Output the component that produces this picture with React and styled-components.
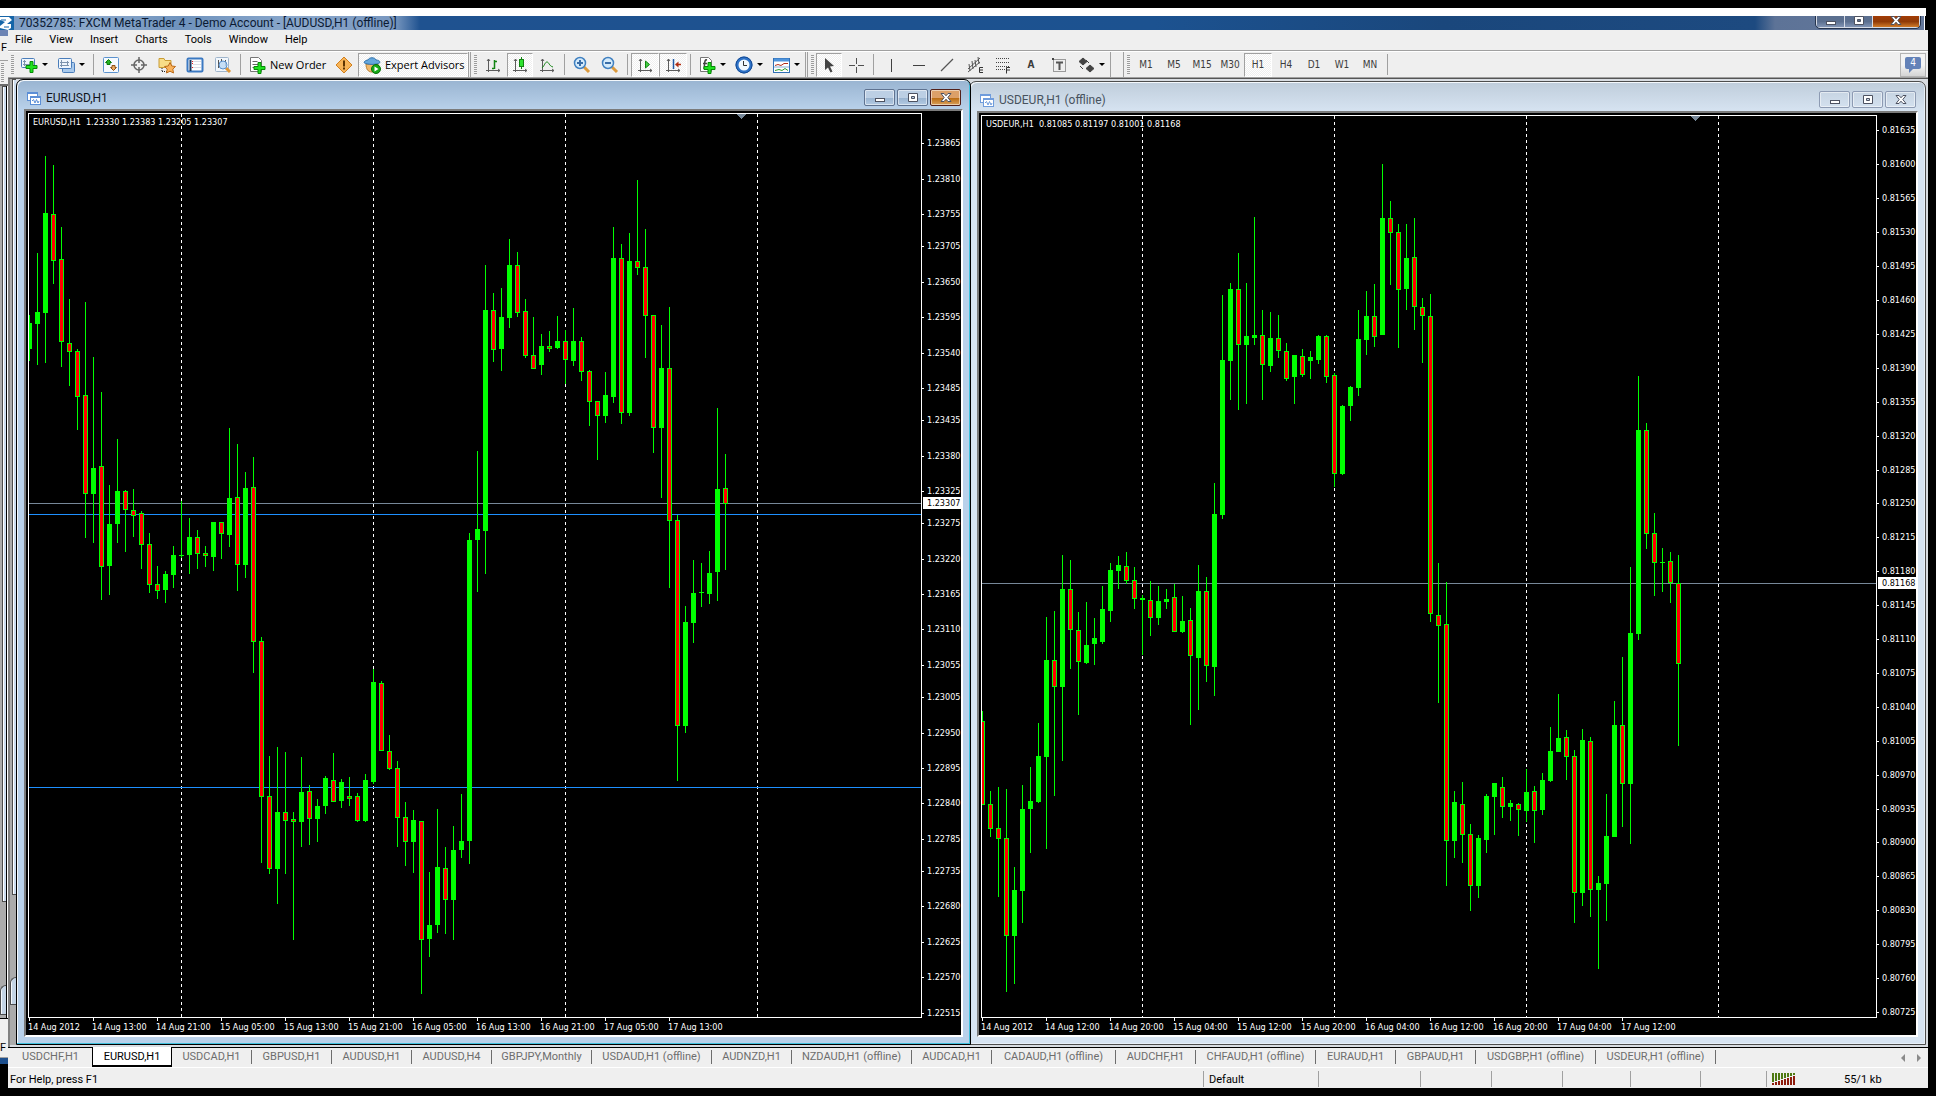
import styled, { createGlobalStyle, css } from "styled-components";

const GlobalStyle = createGlobalStyle`
    * {
        box-sizing: border-box;
    }

    body {
        margin: 0;
        background: #000;
        font-family: Roboto, "Liberation Sans", sans-serif;
        font-size: 11px;
        color: #000;
    }

    button {
        font: inherit;
        color: inherit;
        margin: 0;
        padding: 0;
        border: none;
        background: none;
    }

    svg {
        display: block;
        flex: none;
    }
`

const Page = styled.div`
    height: 100vh;
    min-height: 600px;
    display: flex;
    flex-direction: column;
    padding: 8px 8px 8px 0;
    background: #000;
`

/* main title bar */

const TopStrip = styled.div`
    height: 8px;
    margin-right: 2px;
    background: #fff;
`

const TitleBar = styled.header`
    height: 14px;
    margin-right: 3px;
    display: flex;
    overflow: hidden;
    background: linear-gradient(90deg, #7d9cc4 0, #8ba8cb 100px, #6f93bd 180px, #8aa7cb 300px, #7897bf 395px, #1f5290 420px, #1c5290 60%, #1a477c 75%, #1d4a80 1755px, #5d7397 1775px, #64789c 100%);
    border-right: 1px solid #fff;
`

const AppTitle = styled.h1`
    flex: 1;
    margin: 0 0 0 5px;
    font-size: 12px;
    line-height: 14px;
    font-weight: 400;
    color: #0b1a33;
    white-space: nowrap;
`

const AppButtons = styled.div`
    display: flex;
    height: 12px;
    margin-right: 4px;
    border: 1px solid #d5dbe6;
    border-top: none;
    border-radius: 0 0 4px 4px;
    outline: 1px solid #26344d;
`

const AppButton = styled.button`
    width: ${props => props.$close ? 46 : 28}px;
    display: flex;
    justify-content: center;
    border-right: 1px solid #d5dbe6;
    background: ${props => props.$close ? "linear-gradient(#a33d06, #8f3a08 50%, #d07a28)" : "linear-gradient(#5b6f8f, #5b6f8f 50%, #8194b4)"};

    &:last-child {
        border-right: none;
    }
`

const Body = styled.div`
    flex: 1;
    min-height: 0;
    display: flex;
`

/* sliver of the window behind */

const BackWindow = styled.div`
    width: 8px;
    display: flex;
    flex-direction: column;
    overflow: hidden;
    margin-bottom: 24px;
    background: #efefef;
    border-top: 6px solid #6d84b4;
    border-bottom: 6px solid #1d4f8d;
`

const BackMenu = styled.div`
    height: 25px;
    padding: 5px 0 0 1px;
    border-bottom: 1px solid #a0a0a0;
`

const BackTools = styled.div`
    height: 25px;
    padding: 2px 2px 3px 1px;
    border-bottom: 2px solid #696969;
`

const BackStatus = styled.div`
    height: 40px;
    padding-top: 22px;
    border-top: 1px solid #000;
    border-bottom: 1px solid #a0a0a0;
    white-space: nowrap;
`

const Edges = styled.div`
    width: ${props => props.$back ? 7 : 6}px;
    flex: ${props => props.$back ? "1" : "none"};
    display: flex;
    flex-direction: column;
    background: #ababab;
    border-right: ${props => props.$back ? "1px solid #000" : "none"};
    box-shadow: ${props => props.$back ? "1px 0 #fff" : "none"};
`

const Edge = styled.div`
    flex: ${props => props.$size};
    margin-left: ${props => props.$round ? 0 : 2}px;
    border-radius: ${props => props.$round ? "6px 0 0 0" : "0"};
    border: solid #4d4d4d;
    border-width: 1px 0 1px 1px;
    background: ${props => props.$round ? "linear-gradient(90deg, #f4f8fc 1px, #c4d4e4 1px)" : "linear-gradient(90deg, #fff 1px, #ccdcee 1px)"};
`

const EdgeGap = styled.div`
    flex: ${props => props.$size};
`

/* application window */

const AppWindow = styled.div`
    flex: 1;
    min-width: 0;
    display: flex;
    flex-direction: column;
    background: #efefef;
`

const MenuBar = styled.nav`
    height: 21px;
    display: flex;
    align-items: center;
    gap: 17px;
    padding-left: 7px;
    border-bottom: 1px solid #a0a0a0;
`

const MenuItem = styled.button`
    line-height: 16px;
    font-size: 11px;
`

const Toolbar = styled.div`
    height: 27px;
    display: flex;
    align-items: center;
    border-top: 1px solid #fff;
    border-bottom: 1px solid #a0a0a0;
`

const Grip = styled.span`
    flex: none;
    width: 3px;
    height: 19px;
    margin: 0 2px 0 3px;
    background: repeating-linear-gradient(#9c9c9c 0 1px, #f4f4f4 1px 2px);
`

const BackGrip = styled(Grip)`
    display: block;
    margin: 0;
`

const Separator = styled.span`
    flex: none;
    width: 1px;
    height: 21px;
    margin: 0 3px;
    background: #a0a0a0;
`

const GroupEnd = styled.span`
    flex: none;
    width: ${props => props.$wide ? 14 : 3}px;
    height: 25px;
    border: solid #a0a0a0;
    border-width: 0 1px;
`

const ToolButton = styled.button`
    flex: none;
    width: ${props => props.$width || 28}px;
    height: 24px;
    display: flex;
    align-items: center;
    justify-content: ${props => props.$left ? "flex-start" : "center"};
    gap: 4px;
    padding: ${props => props.$left ? "0 4px" : "0"};
    font-family: "Open Sans", "DejaVu Sans", sans-serif;
    font-size: 11px;
    white-space: nowrap;
    ${props => props.$pressed && css`
        border: 1px solid #a0a0a0;
        border-right-color: #fff;
        border-bottom-color: #fff;
        background: repeating-conic-gradient(#fff 0 25%, #efefef 0 50%) 0 0 / 2px 2px;
    `}
`

const PeriodButton = styled(ToolButton)`
    font-family: "DejaVu Sans Condensed", "DejaVu Sans", sans-serif;
    font-size: 10px;
    color: #3c3c3c;
`

const Caret = styled.span`
    border: solid transparent;
    border-width: 3px 3px 0;
    border-top-color: #000;
`

const ChatButton = styled.button`
    width: 26px;
    height: 24px;
    margin: 0 2px 0 auto;
    display: flex;
    align-items: center;
    justify-content: center;
    border: 1px solid #b4b4b4;
    background: linear-gradient(#f4f4f4 50%, #d4d4d4);
`

const ChatCount = styled.span`
    position: relative;
    width: 16px;
    height: 12px;
    margin-bottom: 4px;
    background: #6482b8;
    border-radius: 2px;
    color: #fff;
    font-family: "DejaVu Sans Condensed", sans-serif;
    font-size: 10px;
    line-height: 12px;

    &::after {
        content: "";
        position: absolute;
        left: 4px;
        top: 12px;
        border: solid transparent;
        border-width: 4px 4px 0 0;
        border-top-color: #6482b8;
    }
`

/* chart windows */

const Workspace = styled.main`
    flex: 1;
    min-height: 0;
    display: flex;
    padding: 0 2px 2px 0;
    background: #d9dde2;
    border-left: 2px solid #808080;
    border-top: 1px solid #555;
`

const ChartFrame = styled.section`
    flex: ${props => props.$grow} 1 0;
    min-width: 0;
    display: flex;
    flex-direction: column;
    position: relative;
    z-index: ${props => props.$active ? 1 : 0};
    margin: ${props => props.$active ? "0" : "2px 0 0 -2px"};
    padding: 0 7px 7px;
    border: 1px solid ${props => props.$active ? "#000" : "#4d4d4d"};
    border-radius: 7px 7px 0 0;
    background: ${props => props.$active ? "linear-gradient(#99b4d1, #b9d1ea 30px)" : "linear-gradient(#bfcddb, #d7e4f2 30px)"};
    box-shadow: inset -1px -1px ${props => props.$active ? "#3fc0dc" : "#e8f0f8"}, inset 1px 1px #f4f8fc;
`

const FrameTitle = styled.header`
    height: 29px;
    flex: none;
    display: flex;
    align-items: center;
    gap: 5px;
    padding: 6px 2px 0 3px;
`

const FrameName = styled.h2`
    flex: 1;
    margin: 0;
    font-size: 12px;
    line-height: 16px;
    font-weight: 400;
    color: ${props => props.$active ? "#10131a" : "#47525e"};
`

const FrameButtons = styled.div`
    display: flex;
    gap: 2px;
`

const FrameButton = styled.button`
    width: 31px;
    height: 17px;
    display: flex;
    align-items: center;
    justify-content: center;
    border: 1px solid ${props => props.$active ? "#5f7391" : "#8d9bb3"};
    border-radius: 2px;
    box-shadow: inset 0 0 0 1px rgba(255, 255, 255, 0.5);
    background: ${props => props.$active ? "linear-gradient(#bccfe4 50%, #98b2cf 50%, #b4cbe3)" : "transparent"};
    ${props => props.$active && props.$close && css`
        border-color: #52201a;
        background: linear-gradient(#dca069 50%, #b8670c 50%, #d9a15c);
    `}
`

const Client = styled.div`
    flex: 1;
    min-height: 0;
    display: grid;
    grid-template-columns: 1fr 39px;
    grid-template-rows: 1fr 17px;
    padding: 2px 0 0 2px;
    background: #000;
    border: 2px solid #fff;
    border-left-color: #7b7b7b;
    border-top-color: #7b7b7b;
`

const Plot = styled.div`
    border: 1px solid #fff;
    min-height: 0;
    min-width: 0;
    overflow: hidden;
`

const Drawing = styled.svg`
    width: 100%;
    height: 100%;
    overflow: hidden;
    font-family: "DejaVu Sans Condensed", "DejaVu Sans", sans-serif;
    font-size: 9px;
    fill: #fff;
    shape-rendering: crispEdges;
`

const TimeDrawing = styled(Drawing)`
    grid-column: 1 / 3;
`

/* chart tabs and status bar */

const Tabs = styled.div`
    height: 21px;
    display: flex;
    align-items: flex-start;
    border-top: 1px solid #000;
    border-bottom: 1px solid #fff;
    padding-left: 1px;
    color: #6d6d6d;
`

const Tab = styled.button`
    width: ${props => props.$width || 80}px;
    height: 14px;
    margin-top: 2px;
    line-height: 14px;
    border-right: 1px solid #6d6d6d;
    white-space: nowrap;
    ${props => props.$first && css`
        width: 83px;
        border-right: none;
    `}
    ${props => props.$active && css`
        height: 20px;
        margin: -1px 0 0;
        padding-top: 1px;
        border: 1px solid #000;
        border-top: none;
        border-bottom-width: 2px;
        background: #fff;
        color: #000;
    `}
`

const TabScroll = styled.div`
    display: flex;
    gap: 10px;
    margin: 6px 7px 0 auto;
`

const StatusBar = styled.footer`
    height: 20px;
    display: flex;
    align-items: center;
    padding-top: 2px;
`

const StatusCell = styled.div`
    width: ${props => props.$width}px;
    height: 16px;
    display: flex;
    align-items: center;
    padding-left: 5px;
    border-left: 1px solid #a0a0a0;
`

const StatusHelp = styled.div`
    flex: 1;
    padding-left: 2px;
`

const Traffic = styled.span`
    margin-left: 48px;
`

// [high, body top, body bottom, low, rising] measured down from the top of the plot
const eurusd = [
    [202,210,236,248,1],[140,199,211,252,1],[43,100,200,250,1],[52,101,148,171,0],[114,146,229,254,0],
    [186,230,239,273,0],[236,238,284,317,0],[189,282,381,425,0],[244,355,381,430,1],[279,353,454,487,0],
    [372,411,453,482,1],[326,378,411,430,1],[377,378,397,439,0],[376,397,403,424,0],[398,400,432,456,0],
    [420,431,472,480,0],[453,471,478,486,0],[458,461,477,490,1],[433,442,462,475,1],[388,442,443,445,1],
    [405,424,442,461,1],[417,424,441,456,0],[433,440,443,454,0],[409,409,444,458,1],[409,409,421,446,0],
    [315,385,422,434,1],[331,384,452,478,0],[359,375,452,465,1],[344,374,529,560,0],[524,528,684,750,0],
    [643,683,756,761,0],[634,699,756,791,1],[639,699,708,761,0],[699,706,709,827,0],[644,679,709,734,1],
    [672,678,706,732,0],[686,693,706,729,1],[663,665,693,701,1],[640,667,689,689,0],[666,669,688,695,1],
    [664,683,686,693,0],[680,683,708,709,0],[661,667,708,709,1],[556,569,669,671,1],[568,570,638,638,0],
    [622,638,656,657,0],[648,655,705,734,0],[689,704,729,753,0],[697,707,729,760,1],[708,708,827,881,0],
    [759,812,826,844,1],[696,754,812,820,1],[734,755,787,821,0],[713,737,787,827,1],[681,728,737,745,1],
    [420,427,728,751,1],[338,416,427,479,1],[152,197,418,461,1],[180,197,237,249,0],[175,204,236,258,1],
    [126,152,205,215,1],[139,152,200,204,0],[186,198,243,245,0],[204,242,256,256,0],[221,233,252,262,1],
    [218,233,236,239,0],[203,228,235,236,1],[217,228,247,271,0],[195,228,248,253,1],[224,228,259,268,0],
    [257,258,289,313,0],[288,288,303,347,0],[259,282,303,310,1],[114,145,284,290,1],[131,145,300,311,0],
    [120,148,300,303,1],[67,148,155,162,0],[116,154,203,245,0],[202,202,315,340,0],[212,255,315,385,1],
    [194,255,408,475,0],[402,407,613,668,0],[493,509,613,620,1],[447,480,510,530,1],[450,479,480,494,1],
    [438,460,481,491,1],[295,376,459,488,1],[341,375,391,457,0],
];

const usdeur = [
    [596,606,690,690,0],[676,689,714,722,0],[672,713,724,782,0],[674,723,821,877,0],[752,775,821,869,1],
    [670,694,776,808,1],[652,686,694,738,1],[608,641,687,688,1],[502,545,642,734,1],[496,545,572,681,0],
    [440,474,572,646,1],[445,474,515,554,0],[497,515,547,600,0],[487,530,548,549,1],[503,523,529,550,1],
    [471,494,527,529,1],[448,455,496,507,1],[441,450,456,474,1],[437,451,466,469,0],[452,465,484,494,0],
    [480,483,485,540,1],[466,485,503,521,0],[471,486,503,510,1],[474,484,487,494,1],[469,482,517,517,0],
    [481,506,517,518,1],[493,505,541,610,0],[450,476,543,595,1],[462,476,551,567,0],[368,399,552,581,1],
    [180,245,400,404,1],[168,174,246,285,1],[138,174,230,295,0],[168,221,230,289,1],[102,220,223,230,1],
    [195,220,250,285,0],[197,223,251,257,1],[200,223,236,243,0],[228,236,264,266,0],[240,240,262,289,1],
    [234,241,260,262,0],[236,242,246,264,1],[220,221,245,249,1],[220,221,262,268,0],[258,260,359,372,0],
    [290,291,359,360,1],[271,272,291,306,1],[195,224,273,281,1],[176,201,225,240,1],[169,201,222,232,0],
    [49,103,220,220,1],[86,103,118,170,0],[109,117,175,233,0],[109,143,174,195,1],[103,142,192,215,0],
    [183,192,201,248,0],[179,201,499,507,0],[448,500,511,588,0],[467,509,726,771,0],[676,687,726,743,1],
    [667,689,720,748,0],[709,719,771,796,0],[720,723,771,783,1],[679,681,725,738,1],[668,668,682,720,1],
    [662,672,692,703,0],[685,688,692,706,1],[688,689,695,721,0],[654,677,696,707,1],[671,676,696,728,0],
    [658,665,695,700,1],[612,636,666,667,1],[579,623,637,637,1],[615,622,642,665,0],[635,641,778,808,0],
    [614,625,778,791,1],[622,626,775,802,0],[761,768,775,854,1],[679,721,769,806,1],[586,610,722,722,1],
    [542,610,669,712,0],[452,518,669,729,1],[261,315,519,525,1],[308,315,419,434,0],[398,418,448,481,0],
    [433,447,448,477,1],[437,446,468,488,0],[440,468,549,631,0],
];

const charts = [
    {
        name: "EURUSD,H1",
        active: true,
        grow: 955,
        quote: "EURUSD,H1\u00a0 1.23330 1.23383 1.23205 1.23307",
        candles: eurusd,
        days: [152, 344, 536, 728],
        shift: 712,
        levels: [401, 674],
        last: 123307,
        top: 123912,
        scale: 0.644,
        prices: [123865, 123810, 123755, 123705, 123650, 123595, 123540, 123485, 123435, 123380, 123325, 123275, 123220, 123165, 123110, 123055, 123005, 122950, 122895, 122840, 122785, 122735, 122680, 122625, 122570, 122515],
        times: ["14 Aug 2012", "14 Aug 13:00", "14 Aug 21:00", "15 Aug 05:00", "15 Aug 13:00", "15 Aug 21:00", "16 Aug 05:00", "16 Aug 13:00", "16 Aug 21:00", "17 Aug 05:00", "17 Aug 13:00"],
    },
    {
        name: "USDEUR,H1 (offline)",
        active: false,
        grow: 957,
        quote: "USDEUR,H1\u00a0 0.81085 0.81197 0.81001 0.81168",
        candles: usdeur,
        days: [160, 352, 544, 736],
        shift: 713,
        levels: [],
        last: 81168,
        top: 81651,
        scale: 0.9687,
        prices: Array.from({ length: 27 }, (_, i) => 81635 - i * 35),
        times: ["14 Aug 2012", "14 Aug 12:00", "14 Aug 20:00", "15 Aug 04:00", "15 Aug 12:00", "15 Aug 20:00", "16 Aug 04:00", "16 Aug 12:00", "16 Aug 20:00", "17 Aug 04:00", "17 Aug 12:00"],
    },
];

const tabs = [
    ["USDCHF,H1"], ["EURUSD,H1"], ["USDCAD,H1"], ["GBPUSD,H1"], ["AUDUSD,H1"], ["AUDUSD,H4"],
    ["GBPJPY,Monthly", 100], ["USDAUD,H1 (offline)", 120], ["AUDNZD,H1"], ["NZDAUD,H1 (offline)", 120],
    ["AUDCAD,H1"], ["CADAUD,H1 (offline)", 124], ["AUDCHF,H1"], ["CHFAUD,H1 (offline)", 120],
    ["EURAUD,H1"], ["GBPAUD,H1"], ["USDGBP,H1 (offline)", 120], ["USDEUR,H1 (offline)", 120],
];

const Svg = ({ children, size = 18 }) => (
    <svg width={size} height={size} viewBox={`0 0 ${size} ${size}`} fill="none" aria-hidden="true">{children}</svg>
);

const Plus = ({ x, y }) => (
    <path transform={`translate(${x} ${y})`} d="M4 .5h3v4h4v3H7v4H4v-4H0v-3h4z" fill="#1fe21f" stroke="#078a07" />
);

const Axes = ({ children }) => (
    <Svg>
        <path d="M4.500 3v13M2 14.500h14M3 5l1.500-2L6 5M14 13l2 1.500-2 1.500" stroke="#5c5c5c" />
        {children}
    </Svg>
);

const icons = {
    newChart: <Svg><rect x="1.500" y="2.500" width="13" height="9" rx="1" fill="#eef5fc" stroke="#4a7dba" /><path d="M4.500 4v6M3 8.500h9M3 5.500h3" stroke="#7c93ad" /><Plus x={6} y={5} /></Svg>,
    profiles: <Svg><rect x="5.500" y="6.500" width="12" height="10" rx="1" fill="#a8c9ec" stroke="#4a7dba" /><rect x="1.500" y="2.500" width="13" height="10" rx="1" fill="#eef5fc" stroke="#4a7dba" /><path d="M4.500 4v7M3 6.500h9M3 9.500h9M10.500 5v5" stroke="#7c93ad" /></Svg>,
    market: <Svg><rect x="1.500" y="1.500" width="15" height="15" rx="1" fill="#f6faff" stroke="#5b92cf" /><path d="M6.500 3.500l3 3H8v2H5v-2H3.500z" fill="#24b324" stroke="#0b7a0b" /><path d="M11.500 14.500l-3-3H10v-2h3v2h1.500z" fill="#ecaa62" stroke="#8e5318" /></Svg>,
    data: <Svg><circle cx="9" cy="9" r="5" stroke="#666" strokeWidth="1.500" /><path d="M9 1v6M9 11v6M1 9h6M11 9h6" stroke="#666" strokeWidth="1.500" /></Svg>,
    folder: <Svg><path d="M1 2.500h5l1 2h6v7H1z" fill="#f8dd87" stroke="#c99c36" /><path d="M4 12v4M4 15.500h5" stroke="#222" strokeDasharray="1 1" /><path d="M12 6.500l1.800 3.500 3.700.5-2.700 2.600.7 3.900-3.500-1.800L8.500 17l.7-3.900L6.500 10.500l3.700-.5z" fill="#f9b35c" stroke="#bb6a18" /></Svg>,
    navigator: <Svg><rect x="1.500" y="2.500" width="15" height="13" rx="1" fill="#fff" stroke="#3b79c2" strokeWidth="2" /><path d="M4.500 4v11" stroke="#14345e" strokeWidth="2" /><path d="M7 5.500h8M7 8.500h8M7 11.500h8" stroke="#d9dde6" /><path d="M6 5.500h1M6 7.500h1M6 11.500h1" stroke="#e02020" /></Svg>,
    tester: <Svg><rect x="1.500" y="1.500" width="13" height="14" rx="1" fill="#f2f7fc" stroke="#9fb5cc" /><path d="M4.500 4v8M7.500 3v3M11.500 4v6" stroke="#555" /><path d="M12 12l4 4" stroke="#dd9638" strokeWidth="3" /><circle cx="9" cy="9" r="4" fill="#bedaf5" fillOpacity=".85" stroke="#5a8fca" /></Svg>,
    order: <Svg><path d="M2.500 1.500h8l3 3v11h-11z" fill="#fff" stroke="#777" /><path d="M4.500 5.500h5M4.500 8.500h7M4.500 11.500h5" stroke="#666" /><Plus x={6} y={6} /></Svg>,
    alert: <Svg><path d="M9 1l8 8-8 8-8-8z" fill="#f7b458" stroke="#d17f1d" strokeLinejoin="round" /><path d="M9 4.500v6M9 11.500v2" stroke="#5c3300" strokeWidth="2" /></Svg>,
    expert: <Svg><path d="M3 8h12c0 5-2 8-6 8S3 13 3 8z" fill="#f1b86a" stroke="#b97d2c" /><path d="M1 6.500C1 5 4 4 5 4c1-3 7-3 8 0 2 0 4 1 4 2.500C15 9 3 9 1 6.500z" fill="#65a7dd" stroke="#3272ab" /><circle cx="13" cy="13" r="4.500" fill="#17aa17" stroke="#087008" /><path d="M11.500 10.500l4 2.500-4 2.500z" fill="#fff" /></Svg>,
    bars: <Axes><path d="M10.500 4v9M8 12.500h2M11 5.500h2" stroke="#128412" strokeWidth="1.500" /></Axes>,
    candles: <Axes><path d="M10.500 1v12" stroke="#128412" /><rect x="8.500" y="3.500" width="4" height="7" fill="#2fe42f" stroke="#128412" /></Axes>,
    line: <Axes><path d="M4 12c3-3 3-6 5-6s2 4 6 5" stroke="#128412" /></Axes>,
    zoomIn: <Svg><path d="M11 11l5 5" stroke="#dd9a3c" strokeWidth="3" /><circle cx="7" cy="7" r="5.500" fill="#d5ebfb" stroke="#4080c0" strokeWidth="1.500" /><path d="M4 7h6M7 4v6" stroke="#3a6ea8" strokeWidth="2" /></Svg>,
    zoomOut: <Svg><path d="M11 11l5 5" stroke="#dd9a3c" strokeWidth="3" /><circle cx="7" cy="7" r="5.500" fill="#d5ebfb" stroke="#4080c0" strokeWidth="1.500" /><path d="M4 7h6" stroke="#3a6ea8" strokeWidth="2" /></Svg>,
    scroll: <Axes><path d="M9.500 5v7l4-3.500z" fill="#45cf45" stroke="#128412" /></Axes>,
    shift: <Axes><path d="M9.500 3v10" stroke="#205aa4" strokeWidth="1.500" /><path d="M17 8.500h-4" stroke="#b02c10" strokeWidth="1.500" /><path d="M11 8.500l3.500-3v6z" fill="#b02c10" /></Axes>,
    indicators: <Svg><path d="M2.500 1.500h8l3 3v11h-11z" fill="#fff" stroke="#777" /><path d="M9 4C6 3 7 8 6 13M5 7.500h4" stroke="#444" strokeWidth="1.500" /><Plus x={6} y={6} /></Svg>,
    periods: <Svg><circle cx="9" cy="9" r="7" fill="#f2f8ff" stroke="#2d72c8" strokeWidth="3" /><circle cx="9" cy="9" r="8" stroke="#164b94" /><path d="M8.500 5v4.500H12" stroke="#333" /></Svg>,
    templates: <Svg><rect x="1.500" y="2.500" width="16" height="14" fill="#fff" stroke="#2f6fb5" /><path d="M2 4h15" stroke="#4f94dc" strokeWidth="3" /><path d="M3 9.500l3-1 3 1 3-2h4" stroke="#b5301c" /><path d="M2 11h15" stroke="#8ab0d8" /><path d="M3 14.500l4-1 3 1 3-2 3 2" stroke="#2f9e2f" /></Svg>,
    cursor: <Svg><path d="M5 2l9 8-4 .5 2.500 5-2 1L8 11.500 5 14z" fill="#444" /></Svg>,
    cross: <Svg><path d="M9.500 2v6M9.500 11v6M2 9.500h6M11 9.500h6" stroke="#505050" /></Svg>,
    vertical: <Svg><path d="M9.500 3v13" stroke="#404040" /></Svg>,
    horizontal: <Svg><path d="M3 9.500h12" stroke="#404040" /></Svg>,
    trend: <Svg><path d="M3 15L15 3" stroke="#555" strokeWidth="1.200" /></Svg>,
    channel: <Svg><path d="M2 13L14 2M2 16L14 6M3 8l1 7M6 5l1 8M9 4l1 7M12 1l1 7" stroke="#555" /><path d="M17 11.500h-3.500v5H17M14 14h3" stroke="#333" /></Svg>,
    fibo: <Svg><path d="M2 2.500h13M2 6.500h13M2 10.500h13M2 13.500h9" stroke="#444" strokeDasharray="1 1" /><path d="M16 11.500h-3.500v6M13 14h3" stroke="#333" /></Svg>,
    label: <Svg><rect x="3.500" y="3.500" width="12" height="12" stroke="#444" strokeDasharray="1 1" /><path d="M6 6.500h7M9.500 7v7" stroke="#555" strokeWidth="2" /><path d="M2 2h2v2H2z" fill="#444" /></Svg>,
    arrows: <Svg><path d="M6 2l4 3.500-4 3.500-4-3.500zM13 9l4 3.500-4 3.500-4-3.500zM3 10l3 3M9 4l3 3" fill="#444" stroke="#444" /></Svg>,
};

const WindowIcon = ({ active }) => (
    <svg width="14" height="14" viewBox="0 0 14 14" fill="#fff" stroke={active ? "#5b8ed6" : "#6f9cdc"} aria-hidden="true">
        <rect x=".5" y="1.500" width="10" height="8" /><path d="M1 2.500h9" />
        <rect x="3.500" y="5.500" width="10" height="8" /><path d="M4 6.500h9M5 10l1.500-1.500L8 12l1.500-3.500L11 12l1-2" fill="none" />
    </svg>
);

const MinGlyph = () => (
    <svg width="12" height="10" viewBox="0 0 12 10" aria-hidden="true"><rect x="1.500" y="5.500" width="9" height="3" fill="#fff" stroke="#4d5261" /></svg>
);

const MaxGlyph = () => (
    <svg width="12" height="10" viewBox="0 0 12 10" aria-hidden="true"><path d="M1.500.5h9v8h-9zM4.500 3.500h3v2h-3z" fill="#fff" fillRule="evenodd" stroke="#4d5261" /></svg>
);

const CloseGlyph = () => (
    <svg width="12" height="10" viewBox="0 0 12 10" aria-hidden="true"><path d="M1 .5h3l2 2.300L8 .5h3L7.800 4.500 11 8.500H8L6 6.200 4 8.500H1l3.200-4z" fill="#fff" stroke="#4d5261" /></svg>
);

const Candle = ({ index, data }) => {
    const [high, top, bottom, low, rising] = data;
    const x = index * 8;
    return (
        <g fill="#0f0">
            <rect x={x} y={high} width="1" height={low - high} />
            <rect x={x - 2} y={top} width="5" height={bottom - top} />
            {!rising && <rect x={x - 1} y={top + 1} width="3" height={bottom - top - 2} fill="#f00" />}
        </g>
    );
};

const Chart = ({ chart }) => {
    const toY = (price) => Math.round((chart.top - price) * chart.scale);
    const format = (price) => (price / 100000).toFixed(5);
    const lastY = toY(chart.last);

    return (
        <ChartFrame $grow={chart.grow} $active={chart.active}>
            <FrameTitle>
                <WindowIcon active={chart.active} />
                <FrameName $active={chart.active}>{chart.name}</FrameName>
                <FrameButtons>
                    <FrameButton $active={chart.active} aria-label="Minimize"><MinGlyph /></FrameButton>
                    <FrameButton $active={chart.active} aria-label="Maximize"><MaxGlyph /></FrameButton>
                    <FrameButton $active={chart.active} $close aria-label="Close"><CloseGlyph /></FrameButton>
                </FrameButtons>
            </FrameTitle>
            <Client>
                <Plot>
                    <Drawing>
                        {chart.days.map(x => (
                            <line key={x} x1={x + 0.5} x2={x + 0.5} y1="0" y2="100%" stroke="#fff" strokeDasharray="3 3" />
                        ))}
                        <rect x="0" y={lastY - 1} width="100%" height="1" fill="#778899" />
                        {chart.levels.map(y => (
                            <rect key={y} x="0" y={y - 1} width="100%" height="1" fill="#1e90ff" />
                        ))}
                        <g transform="translate(0 -1)">
                            {chart.candles.map((data, i) => <Candle key={i} index={i} data={data} />)}
                        </g>
                        <path d={`M${chart.shift - 5} 0h10l-5 5z`} fill="#778899" />
                        <text x="4" y="11">{chart.quote}</text>
                    </Drawing>
                </Plot>
                <Drawing>
                    {chart.prices.map(price => (
                        <g key={price}>
                            <rect x="0" y={toY(price)} width="2" height="1" />
                            <text x="5" y={toY(price) + 3}>{format(price)}</text>
                        </g>
                    ))}
                    <rect x="1" y={lastY - 6} width="38" height="12" />
                    <text x="5" y={lastY + 3} fill="#000">{format(chart.last)}</text>
                </Drawing>
                <TimeDrawing>
                    {chart.times.map((time, i) => (
                        <g key={time}>
                            <rect x={1 + i * 64} y="0" width="1" height="3" />
                            <text x={i * 64} y="12">{time}</text>
                        </g>
                    ))}
                </TimeDrawing>
            </Client>
        </ChartFrame>
    );
};

const Tool = ({ icon, name, pressed, width }) => (
    <ToolButton $pressed={pressed} $width={width} aria-label={name}>{icons[icon]}</ToolButton>
);

const DropTool = ({ icon, name }) => (
    <ToolButton $width={37} $left aria-label={name}>{icons[icon]}<Caret /></ToolButton>
);

const Tools = () => (
    <Toolbar>
        <Grip />
        <DropTool icon="newChart" name="New chart" />
        <DropTool icon="profiles" name="Profiles" />
        <Separator />
        <Tool icon="market" name="Market watch" />
        <Tool icon="data" name="Data window" />
        <Tool icon="folder" name="Navigator" />
        <Tool icon="navigator" name="Terminal" />
        <Tool icon="tester" name="Strategy tester" />
        <Separator />
        <ToolButton $width={86} $left>{icons.order}New Order</ToolButton>
        <Tool icon="alert" name="MetaEditor" />
        <ToolButton $width={110} $left $pressed>{icons.expert}Expert Advisors</ToolButton>
        <GroupEnd />
        <Grip />
        <Tool icon="bars" name="Bar chart" />
        <Tool icon="candles" name="Candlesticks" pressed width={26} />
        <Tool icon="line" name="Line chart" />
        <Separator />
        <Tool icon="zoomIn" name="Zoom in" />
        <Tool icon="zoomOut" name="Zoom out" />
        <Separator />
        <Tool icon="scroll" name="Auto scroll" pressed />
        <Tool icon="shift" name="Chart shift" pressed />
        <Separator />
        <DropTool icon="indicators" name="Indicators" />
        <DropTool icon="periods" name="Periods" />
        <DropTool icon="templates" name="Templates" />
        <GroupEnd />
        <Grip />
        <Tool icon="cursor" name="Cursor" pressed width={26} />
        <Tool icon="cross" name="Crosshair" />
        <Separator />
        <Tool icon="vertical" name="Vertical line" />
        <Tool icon="horizontal" name="Horizontal line" />
        <Tool icon="trend" name="Trendline" />
        <Tool icon="channel" name="Equidistant channel" />
        <Tool icon="fibo" name="Fibonacci retracement" />
        <PeriodButton><b>A</b></PeriodButton>
        <Tool icon="label" name="Text label" />
        <DropTool icon="arrows" name="Arrows" />
        <GroupEnd $wide />
        <Grip />
        {["M1", "M5", "M15", "M30", "H1", "H4", "D1", "W1", "MN"].map(period => (
            <PeriodButton key={period} $pressed={period === "H1"}>{period}</PeriodButton>
        ))}
        <Separator />
        <ChatButton><ChatCount>4</ChatCount></ChatButton>
    </Toolbar>
);

const App = () => {
    return (
        <>
            <GlobalStyle />
            <Page>
                <TopStrip />
                <TitleBar>
                    <svg width="14" height="14" viewBox="0 0 14 14" aria-hidden="true">
                        <rect width="14" height="14" fill="#1565a8" />
                        <path d="M0 1h9l3 3-5 4h4v4l-3 2-8-2v-2l5-4-5-2z" fill="#fff" />
                        <path d="M1 4h5M4 11h5" stroke="#1565a8" />
                    </svg>
                    <AppTitle>70352785: FXCM MetaTrader 4 - Demo Account - [AUDUSD,H1 (offline)]</AppTitle>
                    <AppButtons>
                        <AppButton aria-label="Minimize"><MinGlyph /></AppButton>
                        <AppButton aria-label="Restore"><MaxGlyph /></AppButton>
                        <AppButton $close aria-label="Close"><CloseGlyph /></AppButton>
                    </AppButtons>
                </TitleBar>
                <Body>
                    <BackWindow aria-hidden="true">
                        <BackMenu>F</BackMenu>
                        <BackTools><BackGrip /></BackTools>
                        <Edges $back>
                            <Edge $size={810} />
                            <EdgeGap $size={82} />
                            <Edge $size={28} $round />
                            <EdgeGap $size={3} />
                        </Edges>
                        <BackStatus>F</BackStatus>
                    </BackWindow>
                    <AppWindow>
                        <MenuBar>
                            {["File", "View", "Insert", "Charts", "Tools", "Window", "Help"].map(item => (
                                <MenuItem key={item}>{item}</MenuItem>
                            ))}
                        </MenuBar>
                        <Tools />
                        <Workspace>
                            <Edges>
                                <Edge $size={812} />
                                <EdgeGap $size={82} />
                                <Edge $size={26} $round />
                                <EdgeGap $size={40} />
                            </Edges>
                            {charts.map(chart => <Chart key={chart.name} chart={chart} />)}
                        </Workspace>
                        <Tabs>
                            {tabs.map(([name, width], i) => (
                                <Tab key={name} $width={width} $first={i === 0} $active={i === 1}>{name}</Tab>
                            ))}
                            <TabScroll>
                                <svg width="5" height="8" viewBox="0 0 5 8" aria-hidden="true"><path d="M4 0v8L0 4z" fill="#8a8a8a" /></svg>
                                <svg width="5" height="8" viewBox="0 0 5 8" aria-hidden="true"><path d="M1 0v8l4-4z" fill="#8a8a8a" /></svg>
                            </TabScroll>
                        </Tabs>
                        <StatusBar>
                            <StatusHelp>For Help, press F1</StatusHelp>
                            <StatusCell $width={115}>Default</StatusCell>
                            <StatusCell $width={102} />
                            <StatusCell $width={71} />
                            <StatusCell $width={71} />
                            <StatusCell $width={68} />
                            <StatusCell $width={70} />
                            <StatusCell $width={66} />
                            <StatusCell $width={162}>
                                <svg width="24" height="12" viewBox="0 0 24 12" aria-hidden="true">
                                    {[0, 1, 2, 3, 4, 5, 6, 7].map(i => (
                                        <g key={i}>
                                            <rect x={i * 3} y="0" width="2" height={9 - i} fill="#4f7a12" />
                                            <rect x={i * 3} y={10 - i} width="2" height={2 + i} fill="#8e1c0c" />
                                        </g>
                                    ))}
                                </svg>
                                <Traffic>55/1 kb</Traffic>
                            </StatusCell>
                        </StatusBar>
                    </AppWindow>
                </Body>
            </Page>
        </>
    )
}

export default App
